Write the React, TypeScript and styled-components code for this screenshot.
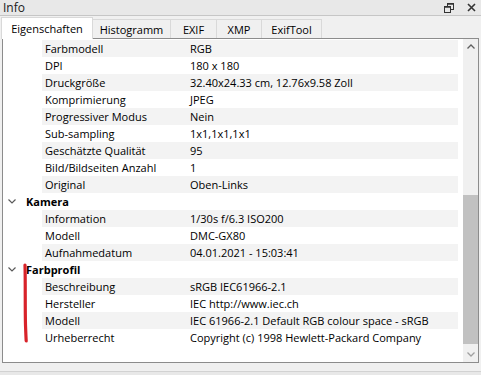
import React from "react";
import styled, { createGlobalStyle } from "styled-components";

const GlobalStyle = createGlobalStyle`
  html, body { margin: 0; padding: 0; }
  body {
    background: #f0f0f0;
    font-family: "Open Sans", "Noto Sans", "Liberation Sans", sans-serif;
    font-size: 11px;
    color: #000;
  }
`;

const Window = styled.div`
  width: 481px;
  height: 375px;
  display: flex;
  flex-direction: column;
  background: #f0f0f0;
  overflow: hidden;
`;

const TitleBar = styled.div`
  height: 16px;
  box-sizing: border-box;
  display: flex;
  align-items: center;
  padding: 0 4px 0 3px;
  background: #e8e8e8;
  border-bottom: 1px solid #c6c6c6;
  color: #1a1a1a;
`;

const Title = styled.span`
  flex: 1;
  font-size: 12px;
  line-height: 15px;
`;

const TitleButtons = styled.div`
  display: flex;
  align-items: center;
  gap: 13px;
  padding-right: 1px;
`;

const TabBar = styled.div`
  height: 22px;
  display: flex;
  align-items: flex-end;
  padding-left: 1px;
`;

const Tab = styled.div<{ $active?: boolean; $w: number }>`
  height: ${(p) => (p.$active ? 22 : 19)}px;
  width: ${(p) => p.$w}px;
  box-sizing: border-box;
  display: flex;
  align-items: center;
  justify-content: center;
  background: ${(p) => (p.$active ? "#ffffff" : "#f0f0f0")};
  border: 1px solid #d9d9d9;
  border-bottom: none;
  border-left: ${(p) => (p.$active ? "1px solid #d9d9d9" : "none")};
  font-size: 11px;
  color: #000;
  position: relative;
  z-index: ${(p) => (p.$active ? 2 : 1)};
  margin-bottom: ${(p) => (p.$active ? -1 : 0)}px;
  padding-bottom: ${(p) => (p.$active ? 1 : 0)}px;
`;

const Panel = styled.div`
  flex: none;
  height: 325px;
  margin: 0 2px 0 2px;
  box-sizing: border-box;
  border: 1px solid #8c8c8c;
  background: #ffffff;
  display: flex;
  position: relative;
`;

const List = styled.div`
  flex: 1;
  padding-top: 1px;
  padding-right: 5px;
  display: flex;
  flex-direction: column;
  overflow: hidden;
`;

const Row = styled.div`
  height: 17px;
  display: flex;
  align-items: center;
`;

const ChildBody = styled.div<{ $alt: boolean }>`
  flex: 1;
  height: 17px;
  margin-left: 39px;
  display: flex;
  align-items: center;
  background: ${(p) => (p.$alt ? "#f3f3f3" : "transparent")};
`;

const Label = styled.span`
  width: 145px;
  padding-left: 3px;
  white-space: nowrap;
`;

const Value = styled.span`
  white-space: nowrap;
`;

const HeaderBody = styled.div`
  flex: 1;
  height: 17px;
  display: flex;
  align-items: center;
  padding-left: 5px;
  font-weight: 700;
`;

const Chevron = styled.svg`
  width: 8px;
  height: 5px;
  margin-right: 10px;
  flex: none;
`;

const ScrollBar = styled.div`
  width: 15px;
  background: #f0f0f0;
  display: flex;
  flex-direction: column;
`;

const ArrowBox = styled.div`
  height: 15px;
  display: flex;
  align-items: center;
  justify-content: center;
`;

const Track = styled.div`
  flex: 1;
  display: flex;
  flex-direction: column;
  padding: 141px 0 3px 0;
`;

const Thumb = styled.div`
  flex: 1;
  background: #c1c1c1;
`;

const Footer = styled.div`
  flex: 1;
  display: flex;
  flex-direction: column;
`;

const FooterGap = styled.div`
  height: 8px;
`;

const FooterStrip = styled.div`
  flex: 1;
  border-top: 1px solid #d2d2d2;
  background: #e8e8e8;
`;

const RedMark = styled.svg`
  position: absolute;
  left: 17px;
  top: 224px;
  width: 12px;
  height: 82px;
  pointer-events: none;
`;

type Item =
  | { kind: "child"; label: string; value: string }
  | { kind: "header"; label: string };

const items: Item[] = [
  { kind: "child", label: "Farbmodell", value: "RGB" },
  { kind: "child", label: "DPI", value: "180 x 180" },
  { kind: "child", label: "Druckgröße", value: "32.40x24.33 cm, 12.76x9.58 Zoll" },
  { kind: "child", label: "Komprimierung", value: "JPEG" },
  { kind: "child", label: "Progressiver Modus", value: "Nein" },
  { kind: "child", label: "Sub-sampling", value: "1x1,1x1,1x1" },
  { kind: "child", label: "Geschätzte Qualität", value: "95" },
  { kind: "child", label: "Bild/Bildseiten Anzahl", value: "1" },
  { kind: "child", label: "Original", value: "Oben-Links" },
  { kind: "header", label: "Kamera" },
  { kind: "child", label: "Information", value: "1/30s f/6.3 ISO200" },
  { kind: "child", label: "Modell", value: "DMC-GX80" },
  { kind: "child", label: "Aufnahmedatum", value: "04.01.2021 - 15:03:41" },
  { kind: "header", label: "Farbprofil" },
  { kind: "child", label: "Beschreibung", value: "sRGB IEC61966-2.1" },
  { kind: "child", label: "Hersteller", value: "IEC http://www.iec.ch" },
  { kind: "child", label: "Modell", value: "IEC 61966-2.1 Default RGB colour space - sRGB" },
  { kind: "child", label: "Urheberrecht", value: "Copyright (c) 1998 Hewlett-Packard Company" },
];

const tabs = [
  { name: "Eigenschaften", w: 92 },
  { name: "Histogramm", w: 78 },
  { name: "EXIF", w: 46 },
  { name: "XMP", w: 45 },
  { name: "ExifTool", w: 60 },
];

export default function App() {
  return (
    <>
      <GlobalStyle />
      <Window>
        <TitleBar>
          <Title>Info</Title>
          <TitleButtons>
            <svg width="10" height="10" viewBox="0 0 10 10">
              <rect x="3.5" y="0.5" width="6" height="6" fill="none" stroke="#333" />
              <line x1="3.5" y1="1" x2="9.5" y2="1" stroke="#333" strokeWidth="1.5" />
              <rect x="0.5" y="3.5" width="6" height="6" fill="#e8e8e8" stroke="#333" />
              <line x1="0.5" y1="4" x2="6.5" y2="4" stroke="#333" strokeWidth="1.5" />
            </svg>
            <svg width="9" height="9" viewBox="0 0 9 9">
              <path d="M1 1 L8 8 M8 1 L1 8" stroke="#333" strokeWidth="1.6" />
            </svg>
          </TitleButtons>
        </TitleBar>
        <TabBar>
          {tabs.map((t, i) => (
            <Tab key={t.name} $active={i === 0} $w={t.w}>
              {t.name}
            </Tab>
          ))}
        </TabBar>
        <Panel>
          <List>
            {items.map((it, i) =>
              it.kind === "header" ? (
                <Row key={i}>
                  <HeaderBody>
                    <Chevron viewBox="0 0 8 5">
                      <path d="M0.5 0.5 L4 4 L7.5 0.5" fill="none" stroke="#5a5a5a" strokeWidth="1.2" />
                    </Chevron>
                    {it.label}
                  </HeaderBody>
                </Row>
              ) : (
                <Row key={i}>
                  <ChildBody $alt={i % 2 === 0}>
                    <Label>{it.label}</Label>
                    <Value>{it.value}</Value>
                  </ChildBody>
                </Row>
              )
            )}
          </List>
          <ScrollBar>
            <ArrowBox>
              <svg width="8" height="5" viewBox="0 0 8 5">
                <path d="M0.5 4.5 L4 1 L7.5 4.5" fill="none" stroke="#606060" strokeWidth="1.3" />
              </svg>
            </ArrowBox>
            <Track>
              <Thumb />
            </Track>
            <ArrowBox>
              <svg width="8" height="5" viewBox="0 0 8 5">
                <path d="M0.5 0.5 L4 4 L7.5 0.5" fill="none" stroke="#a0a0a0" strokeWidth="1.3" />
              </svg>
            </ArrowBox>
          </ScrollBar>
          <RedMark viewBox="0 0 12 82">
            <path
              d="M5 2 C5.5 20 5 45 5.5 62 C5.8 70 6 75 6.2 78"
              fill="none"
              stroke="#d8232a"
              strokeWidth="3.2"
              strokeLinecap="round"
            />
          </RedMark>
        </Panel>
        <Footer>
          <FooterGap />
          <FooterStrip />
        </Footer>
      </Window>
    </>
  );
}
